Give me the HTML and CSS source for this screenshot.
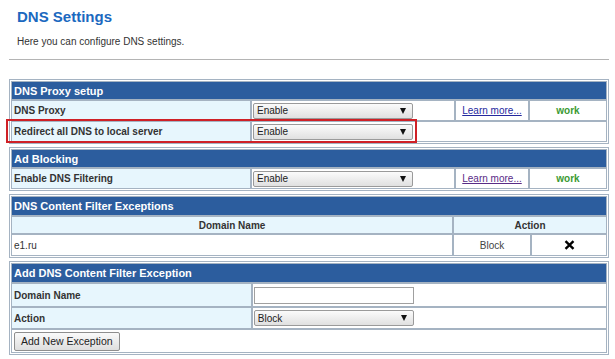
FILE: index.html
```html
<!DOCTYPE html>
<html>
<head>
<meta charset="utf-8">
<link rel="stylesheet" href="styles.css">
</head>
<body>
<div class="page">
  <h1 class="title">DNS Settings</h1>
  <p class="desc">Here you can configure DNS settings.</p>
  <div class="rule"></div>

  <div class="group first">
    <table class="grp">
      <colgroup><col class="c-label"><col class="c-sel"><col class="c-learn"><col class="c-stat"></colgroup>
      <tr class="hdr"><td colspan="4">DNS Proxy setup</td></tr>
      <tr class="row">
        <td class="lbl">DNS Proxy</td>
        <td class="val"><span class="sel"><select><option>Enable</option></select></span></td>
        <td class="learn"><a href="#" class="link">Learn more...</a></td>
        <td class="stat">work</td>
      </tr>
      <tr class="row">
        <td class="lbl">Redirect all DNS to local server</td>
        <td class="val" colspan="3"><span class="sel"><select><option>Enable</option></select></span></td>
      </tr>
    </table>
    <div class="highlight"></div>
  </div>

  <div class="group">
    <table class="grp">
      <colgroup><col class="c-label"><col class="c-sel"><col class="c-learn"><col class="c-stat"></colgroup>
      <tr class="hdr"><td colspan="4">Ad Blocking</td></tr>
      <tr class="row">
        <td class="lbl">Enable DNS Filtering</td>
        <td class="val"><span class="sel"><select><option>Enable</option></select></span></td>
        <td class="learn"><a href="#" class="link visited">Learn more...</a></td>
        <td class="stat">work</td>
      </tr>
    </table>
  </div>

  <div class="group">
    <table class="grp">
      <colgroup><col class="c-domain"><col class="c-act"><col class="c-del"></colgroup>
      <tr class="hdr tall"><td colspan="3">DNS Content Filter Exceptions</td></tr>
      <tr class="colhdr"><td>Domain Name</td><td colspan="2">Action</td></tr>
      <tr class="row mid">
        <td class="plain">e1.ru</td>
        <td class="center">Block</td>
        <td class="center"><svg class="x" width="11" height="10" viewBox="0 0 11 10"><path d="M1.5 1.2 L9.5 8.8 M9.5 1.2 L1.5 8.8" stroke="#000" stroke-width="2.4" stroke-linecap="butt"/></svg></td>
      </tr>
    </table>
  </div>

  <div class="group">
    <table class="grp">
      <colgroup><col class="c-label"><col class="c-rest"></colgroup>
      <tr class="hdr tall"><td colspan="2">Add DNS Content Filter Exception</td></tr>
      <tr class="row tall">
        <td class="lbl">Domain Name</td>
        <td class="val"><input class="txt" type="text"></td>
      </tr>
      <tr class="row mid">
        <td class="lbl">Action</td>
        <td class="val"><span class="sel"><select><option>Block</option></select></span></td>
      </tr>
      <tr class="row tall">
        <td class="btncell" colspan="2"><button class="btn">Add New Exception</button></td>
      </tr>
    </table>
  </div>
</div>
</body>
</html>
```

FILE: styles.css
```css
body {
  margin: 0;
  background: #fff;
  color: #333;
  font-family: "Liberation Sans", Arial, sans-serif;
}

.page {
  width: 600px;
  margin-left: 9px;
}

.title {
  margin: 0;
  padding: 8px 0 0 8px;
  font-size: 15px;
  line-height: 18px;
  font-weight: bold;
  color: #1b69bf;
}

.desc {
  margin: 0;
  padding: 10px 0 0 8px;
  font-size: 10px;
  line-height: 12px;
  color: #333;
}

.rule {
  margin-top: 11px;
  border-top: 1px solid #b4b4b4;
}

.group {
  position: relative;
  margin-top: 3px;
}

.group.first {
  margin-top: 19px;
}

.grp {
  width: 600px;
  table-layout: fixed;
  border-collapse: separate;
  border-spacing: 2px;
  border: 1px solid #a5b3c2;
  background: #a5b3c2;
  box-shadow: inset 0 0 0 1px #fff;
}

.grp td {
  padding: 0;
  font-size: 10px;
}

.c-label { width: 238px; }
.c-sel { width: 202px; }
.c-learn { width: 72px; }
.c-stat { width: 76px; }
.c-domain { width: 440px; }
.c-act { width: 76px; }
.c-del { width: 74px; }
.c-rest { width: 352px; }

.hdr td {
  height: 17px;
  background: #2c5d9e;
  color: #fff;
  font-weight: bold;
  font-size: 11px;
  padding-left: 2px;
}

.hdr.tall td {
  height: 18px;
}

.row td {
  height: 19px;
  background: #fff;
}

.row.mid td {
  height: 20px;
}

.row.tall td {
  height: 22px;
}

.row td.lbl {
  background: #e7f6fd;
  font-weight: bold;
  padding-left: 2px;
  color: #333;
}

.row td.val {
  padding-left: 1px;
}

.row td.plain {
  padding-left: 2px;
  color: #333;
}

.center {
  text-align: center;
  color: #444;
}

.learn {
  text-align: center;
}

.link {
  color: #25299e;
  text-decoration: underline;
  font-size: 10px;
}

.link.visited {
  color: #5a2c86;
}

.stat {
  text-align: center;
  color: #3b9a33;
  font-weight: bold;
}

.colhdr td {
  height: 16px;
  background: #e7f6fd;
  font-weight: bold;
  text-align: center;
  color: #333;
}

.x {
  display: block;
  margin: 0 auto;
}

.sel {
  position: relative;
  display: inline-block;
  vertical-align: middle;
}

.sel select {
  appearance: none;
  -webkit-appearance: none;
  width: 160px;
  height: 16px;
  margin: 0;
  padding: 0 0 0 3px;
  border: 1px solid #9a9a9a;
  border-radius: 2px;
  background: linear-gradient(#fbfbfb, #e0e0e0);
  font-family: "Liberation Sans", Arial, sans-serif;
  font-size: 10px;
  color: #222;
  display: block;
}

.sel::after {
  content: "";
  position: absolute;
  right: 7px;
  top: 5px;
  border-left: 3px solid transparent;
  border-right: 3px solid transparent;
  border-top: 6px solid #111;
  pointer-events: none;
}

.txt {
  display: block;
  width: 160px;
  height: 17px;
  box-sizing: border-box;
  margin: 0;
  border: 1px solid #a0a0a0;
  background: #fff;
  padding: 0 2px;
}

.btncell {
  padding-left: 2px !important;
}

.btn {
  display: block;
  height: 19px;
  padding: 0 6px;
  border: 1px solid #8e8e8e;
  border-radius: 2px;
  background: linear-gradient(#fafafa, #dedede);
  font-family: "Liberation Sans", Arial, sans-serif;
  font-size: 10.5px;
  color: #222;
}

.highlight {
  position: absolute;
  left: -3px;
  top: 40px;
  width: 407px;
  height: 20px;
  border: 2px solid #cf2026;
  pointer-events: none;
}
```
